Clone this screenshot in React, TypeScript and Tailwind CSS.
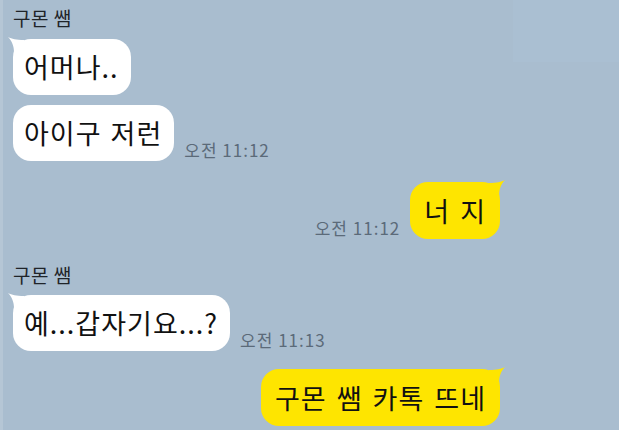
import React from "react";

const font = { fontFamily: '"Noto Sans CJK KR", "Noto Sans", sans-serif' };

type Msg =
  | { kind: "name"; text: string; id: string }
  | { kind: "in"; text: string; time?: string; tail?: boolean; id: string }
  | { kind: "out"; text: string; time?: string; tail?: boolean; id: string };

const messages: Msg[] = [
  { kind: "name", text: "구몬 쌤", id: "n1" },
  { kind: "in", text: "어머나..", tail: true, id: "m1" },
  { kind: "in", text: "아이구 저런", time: "오전 11:12", id: "m2" },
  { kind: "out", text: "너 지", time: "오전 11:12", tail: true, id: "m3" },
  { kind: "name", text: "구몬 쌤", id: "n2" },
  { kind: "in", text: "예...갑자기요...?", time: "오전 11:13", tail: true, id: "m4" },
  { kind: "out", text: "구몬 쌤 카톡 뜨네", tail: true, id: "m5" },
];

const TailLeft = () => (
  <svg className="absolute -left-[5px] top-[-2px]" width="16" height="16" viewBox="0 0 16 16">
    <path d="M0 0 C4 2 8 3 16 3 L16 16 L6 16 C6 9 4 4 0 0 Z" fill="#ffffff" />
  </svg>
);

const TailRight = () => (
  <svg className="absolute -right-[5px] top-[-2px]" width="16" height="16" viewBox="0 0 16 16">
    <path d="M16 0 C12 2 8 3 0 3 L0 16 L10 16 C10 9 12 4 16 0 Z" fill="#fee500" />
  </svg>
);

export default function App() {
  return (
    <div
      className="w-[619px] h-[430px] overflow-hidden bg-[#a9bdcf] relative border-l-[3px] border-[#b5c6d5]"
      style={font}
    >
      <div className="absolute right-0 top-0 w-[106px] h-[62px] bg-[#aabfd2]" />
      <div className="relative flex flex-col pl-[10px] pr-[119px] pt-[6px]">
        {messages.map((m) => {
          if (m.kind === "name") {
            return (
              <div
                key={m.id}
                className={`text-[19px] leading-[24px] tracking-[0.5px] text-[#1f2429] ${m.id === "n2" ? "mt-[24px]" : ""}`}
              >
                {m.text}
              </div>
            );
          }
          if (m.kind === "in") {
            return (
              <div
                key={m.id}
                className={`flex items-end gap-[10px] ${m.id === "m1" ? "mt-[9px]" : m.id === "m4" ? "mt-[8px]" : "mt-[10px]"}`}
              >
                <div className="relative bg-white rounded-[18px] pl-[11px] pr-[12px] py-[10px] text-[27px] leading-[36px] tracking-[1px] [word-spacing:2px] text-[#111111]">
                  {m.tail && <TailLeft />}
                  <span className="relative">{m.text}</span>
                </div>
                {m.time && (
                  <span className="text-[17px] leading-[22px] tracking-[1px] text-[#5b6a79] whitespace-nowrap">
                    {m.time}
                  </span>
                )}
              </div>
            );
          }
          return (
            <div
              key={m.id}
              className={`flex items-end justify-end gap-[10px] ${m.id === "m3" ? "mt-[21px]" : "mt-[18px]"}`}
            >
              {m.time && (
                <span className="text-[17px] leading-[22px] tracking-[1px] text-[#5b6a79] whitespace-nowrap">
                  {m.time}
                </span>
              )}
              <div className="relative bg-[#fee500] rounded-[18px] px-[14px] py-[10px] text-[27px] leading-[37px] tracking-[1px] [word-spacing:3px] text-[#111111]">
                {m.tail && <TailRight />}
                <span className="relative">{m.text}</span>
              </div>
            </div>
          );
        })}
      </div>
    </div>
  );
}
